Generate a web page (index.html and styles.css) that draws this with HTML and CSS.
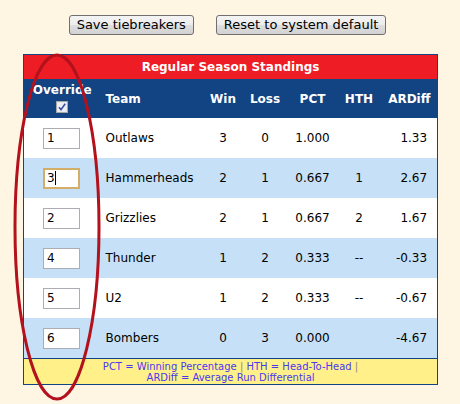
FILE: index.html
```html
<!DOCTYPE html>
<html>
<head>
<meta charset="utf-8">
<link rel="stylesheet" href="styles.css">
</head>
<body>
<div class="page">
  <div class="actions">
    <button class="btn">Save tiebreakers</button>
    <button class="btn">Reset to system default</button>
  </div>
  <div class="wrap">
    <table class="standings">
      <colgroup>
        <col class="c-ovr"><col class="c-team"><col class="c-win"><col class="c-loss"><col class="c-pct"><col class="c-hth"><col class="c-ard">
      </colgroup>
      <thead>
        <tr class="title"><th colspan="7">Regular Season Standings</th></tr>
        <tr class="heads">
          <th class="ovr"><div class="ovr-inner"><div class="ovr-label">Override</div><span class="chk"><svg width="12" height="12" viewBox="0 0 12 12"><rect x="0.5" y="0.5" width="11" height="11" fill="#e4e4e4" stroke="#a8a8a8"/><rect x="1.5" y="1.5" width="9" height="9" fill="#eef0f4"/><path d="M3 6.2 L5 8.6 L9.2 2.8" fill="none" stroke="#3b4fa8" stroke-width="1.6"/></svg></span></div></th>
          <th class="team">Team</th>
          <th>Win</th>
          <th>Loss</th>
          <th>PCT</th>
          <th>HTH</th>
          <th>ARDiff</th>
        </tr>
      </thead>
      <tbody>
        <tr><td class="ovr"><input class="rank" value="1"></td><td class="team">Outlaws</td><td>3</td><td>0</td><td>1.000</td><td></td><td class="ard">1.33</td></tr>
        <tr class="alt"><td class="ovr"><input class="rank focus" value="3"><span class="caret"></span></td><td class="team">Hammerheads</td><td>2</td><td>1</td><td>0.667</td><td>1</td><td class="ard">2.67</td></tr>
        <tr><td class="ovr"><input class="rank" value="2"></td><td class="team">Grizzlies</td><td>2</td><td>1</td><td>0.667</td><td>2</td><td class="ard">1.67</td></tr>
        <tr class="alt"><td class="ovr"><input class="rank" value="4"></td><td class="team">Thunder</td><td>1</td><td>2</td><td>0.333</td><td>--</td><td class="ard">-0.33</td></tr>
        <tr><td class="ovr"><input class="rank" value="5"></td><td class="team">U2</td><td>1</td><td>2</td><td>0.333</td><td>--</td><td class="ard">-0.67</td></tr>
        <tr class="alt"><td class="ovr"><input class="rank" value="6"></td><td class="team">Bombers</td><td>0</td><td>3</td><td>0.000</td><td></td><td class="ard">-4.67</td></tr>
      </tbody>
      <tfoot>
        <tr><td colspan="7" class="legend">PCT = Winning Percentage <span class="pipe">|</span> HTH = Head-To-Head <span class="pipe">|</span><br>ARDiff = Average Run Differential</td></tr>
      </tfoot>
    </table>
    <svg class="circle" width="100" height="356" viewBox="0 0 100 356">
      <ellipse cx="44" cy="175" rx="42" ry="172" fill="none" stroke="#b3121d" stroke-width="3"/>
    </svg>
  </div>
</div>
</body>
</html>
```
FILE: styles.css
```css
html, body {
  margin: 0;
  padding: 0;
  background: #fef5e3;
  font-family: "DejaVu Sans", Verdana, sans-serif;
}
.page {
  width: 460px;
  height: 404px;
  overflow: hidden;
}
.actions {
  display: flex;
  justify-content: center;
  gap: 22px;
  padding-top: 15px;
  padding-right: 5px;
}
.btn {
  font-family: "DejaVu Sans", Verdana, sans-serif;
  font-size: 13px;
  height: 20px;
  padding: 0 7px;
  color: #000;
  border: 1px solid #707070;
  border-radius: 3px;
  background: linear-gradient(#f4f4f4 0%, #ececec 50%, #dedede 51%, #d2d2d2 100%);
  line-height: 18px;
}
.wrap {
  position: relative;
  margin: 19px 0 0 23px;
  width: 414px;
}
.standings {
  border-collapse: collapse;
  width: 414px;
  table-layout: fixed;
  font-size: 12px;
  border: 1px solid #134382;
}
.c-ovr { width: 77px; }
.c-team { width: 104px; }
.c-win { width: 37px; }
.c-loss { width: 47px; }
.c-pct { width: 48px; }
.c-hth { width: 45px; }
.c-ard { width: 56px; }
.title th {
  background: #ee1c24;
  color: #fff;
  font-weight: bold;
  font-size: 12px;
  height: 24px;
  padding: 0;
  text-align: center;
}
.heads th {
  background: #124383;
  color: #fff;
  font-weight: bold;
  font-size: 12px;
  height: 39px;
  padding: 0;
  text-align: center;
  white-space: nowrap;
}
.heads th.team { text-align: left; padding-left: 5px; }
.heads th.ovr { vertical-align: top; }
.ovr-inner {
  display: flex;
  flex-direction: column;
  align-items: center;
  padding-top: 3px;
  height: 36px;
  box-sizing: border-box;
}
.ovr-label {
  height: 16px;
  line-height: 16px;
}
.chk { display: block; width: 12px; height: 12px; line-height: 0; margin-top: 3px; }
tbody td {
  height: 40px;
  padding: 0;
  text-align: center;
  color: #000;
  background: #fff;
}
tbody tr.alt td { background: #c6e0f7; }
tbody td.team { text-align: left; padding-left: 5px; }
tbody td.ard { text-align: right; padding-right: 10px; }
td.ovr { position: relative; text-align: left; padding-left: 19px; }
.rank {
  box-sizing: border-box;
  width: 37px;
  height: 21px;
  border: 1px solid #abadb3;
  background: #fff;
  font-family: "DejaVu Sans", Verdana, sans-serif;
  font-size: 12px;
  padding: 0 3px;
  margin: 0;
  color: #000;
  display: block;
  outline: none;
}
.rank.focus { border: 2px solid #d4ad68; padding: 0 2px; }
.caret {
  position: absolute;
  left: 31px;
  top: 13px;
  width: 1px;
  height: 14px;
  background: #000;
}
.legend {
  background: #fff08a;
  color: #4a38f0;
  font-size: 10px;
  line-height: 11.5px;
  text-align: center;
  height: 24px;
  padding: 1px 0 0;
  border-top: 1px solid #134382;
}
.pipe { color: #888; }
.circle {
  position: absolute;
  left: -10px;
  top: -2px;
  pointer-events: none;
}
```
